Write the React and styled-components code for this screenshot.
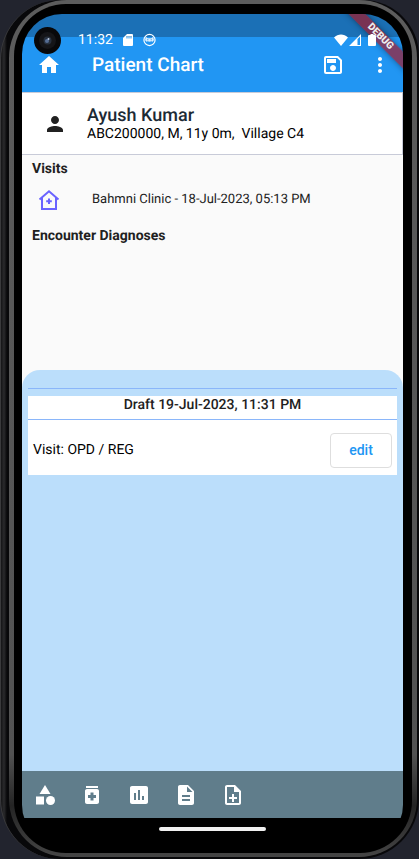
import React from "react";
import styled, { createGlobalStyle } from "styled-components";
import {
  MdHome,
  MdOutlineSave,
  MdMoreVert,
  MdPerson,
  MdCategory,
  MdMedication,
  MdAssessment,
  MdDescription,
  MdOutlineNoteAdd,
} from "react-icons/md";

const GlobalStyle = createGlobalStyle`
  * { box-sizing: border-box; }
  body {
    margin: 0;
    background: #22242e;
    font-family: Roboto, "Noto Sans", sans-serif;
    color: #212121;
    text-rendering: geometricPrecision;
  }
  h1, h2, p { margin: 0; }
  button { font: inherit; cursor: pointer; }
`;

const Shell = styled.div`
  display: flex;
  height: 100vh;
  min-height: 640px;
  padding: 0 2px 2px 8px;
  border-left: 1px solid #3a3a3c;
  border-radius: 60px 56px 60px 60px;
  background: linear-gradient(90deg, #141416, #2a2a2c 3px, #08080a 6px);
`;

const Rim = styled.div`
  flex: 1;
  display: flex;
  min-width: 0;
  padding: 4px 5px;
  border-radius: 58px;
  background: linear-gradient(#5c5c5c, #525252 88%, #242424 94%, #454545);
`;

const Glass = styled.div`
  flex: 1;
  display: flex;
  min-width: 0;
  padding: 10px 9px 8px 8px;
  border-radius: 52px;
  background: #000000;
`;

const Screen = styled.main`
  flex: 1;
  display: flex;
  flex-direction: column;
  min-width: 0;
  position: relative;
  overflow: hidden;
  border-radius: 40px;
  background: #000000;
`;

const Header = styled.header`
  padding: 17px 0 11px;
  background: linear-gradient(#1b70b6 23px, #2196f3 23px);
  color: #ffffff;
`;

const StatusBar = styled.div`
  display: flex;
  align-items: center;
  height: 18px;
  padding: 0 27px 0 12px;
  position: relative;
  z-index: 2;
`;

const Camera = styled.svg`
  width: 27px;
  height: 27px;
  margin-right: 17px;
`;

const Clock = styled.span`
  margin-right: 10px;
  font-size: 14px;
  line-height: 18px;
`;

const StatusIcon = styled.svg`
  flex: none;
  width: ${(p) => p.$width}px;
  height: 14px;
`;

const Notifications = styled.div`
  display: flex;
  gap: 10px;
`;

const Connectivity = styled.div`
  display: flex;
  gap: 1px;
  margin: 0 7px 0 auto;
`;

const DebugRibbon = styled.div`
  position: absolute;
  top: 17px;
  right: -27px;
  width: 100px;
  z-index: 1;
  transform: rotate(45deg);
  background: rgba(172, 18, 30, 0.65);
  box-shadow: 0 0 6px rgba(0, 0, 0, 0.4);
  color: #eeeeee;
  font-size: 10px;
  font-weight: 900;
  line-height: 12px;
  text-align: center;
`;

const Toolbar = styled.div`
  display: flex;
  align-items: center;
  height: 32px;
  padding: 0 11px 0 15px;
`;

const IconButton = styled.button`
  display: flex;
  padding: 0;
  border: 0;
  background: none;
  color: inherit;
  font-size: 24px;
`;

const ToolbarActions = styled.div`
  display: flex;
  gap: 23px;
  margin-left: auto;
`;

const Title = styled.h1`
  margin-left: 31px;
  font-size: 19px;
  line-height: 24px;
  font-weight: 500;
`;

const Patient = styled.section`
  display: flex;
  align-items: center;
  gap: 20px;
  height: 63px;
  padding-left: 21px;
  border: 1px solid #c8cbd8;
  border-left-width: 0;
  background: #ffffff;
  svg { font-size: 24px; }
`;

const PatientName = styled.h2`
  color: #1c2a35;
  font-size: 18px;
  line-height: 20px;
  font-weight: 500;
`;

const PatientInfo = styled.p`
  color: #000000;
  font-size: 14px;
  line-height: 16px;
  white-space: pre;
`;

const Chart = styled.section`
  flex: 34 1 0;
  padding: 5px 10px 3px;
  background: #fafafa;
`;

const Heading = styled.h2`
  font-size: 14px;
  line-height: 18px;
  font-weight: 700;
`;

const VisitRow = styled.div`
  display: flex;
  align-items: center;
  gap: 32px;
  height: 49px;
  padding: 0 6px 6px;
  font-size: 13px;
  svg { width: 22px; height: 22px; }
`;

const SheetArea = styled.section`
  flex: 66 1 0;
  display: flex;
  background: #fafafa;
`;

const Sheet = styled.div`
  flex: 1;
  min-width: 0;
  padding: 18px 6px;
  border-radius: 18px 18px 0 0;
  background: #bbdefb;
`;

const Rule = styled.hr`
  height: 1px;
  margin: 0;
  border: 0;
  background: #8ab6fa;
`;

const Draft = styled.article`
  margin-top: 7px;
  background: #ffffff;
`;

const DraftTitle = styled.h2`
  padding-bottom: 5px;
  font-size: 14px;
  line-height: 18px;
  font-weight: 500;
  text-align: center;
`;

const DraftRow = styled.div`
  display: flex;
  align-items: center;
  justify-content: space-between;
  height: 55px;
  padding: 6px 5px 0;
  color: #000000;
  font-size: 14px;
`;

const EditButton = styled.button`
  width: 62px;
  height: 35px;
  border: 1px solid #dedede;
  border-radius: 4px;
  background: #ffffff;
  color: #2196f3;
  font-size: 14px;
  font-weight: 500;
`;

const BottomBar = styled.nav`
  display: flex;
  align-items: center;
  gap: 23px;
  height: 47px;
  padding: 0 11px;
  background: #607d8b;
  color: #ffffff;
`;

const GestureArea = styled.div`
  height: 27px;
  padding-top: 9px;
`;

const GesturePill = styled.div`
  width: 28%;
  height: 4px;
  margin: 0 auto;
  border-radius: 2px;
  background: #f0f0f0;
`;

const tools = [
  ["Observations", MdCategory],
  ["Medications", MdMedication],
  ["Results", MdAssessment],
  ["Documents", MdDescription],
  ["Add note", MdOutlineNoteAdd],
];

function CameraLens() {
  return (
    <Camera viewBox="0 0 27 27" aria-hidden="true">
      <circle cx="13.5" cy="13.5" r="13.5" fill="#08080a" />
      <circle cx="13.5" cy="13.5" r="8.5" fill="#151518" />
      <circle cx="13.5" cy="13.5" r="4" fill="#27303e" />
      <circle cx="13" cy="14" r="2" fill="#566d94" />
      <circle cx="14.5" cy="12" r="1" fill="#b8c6dd" />
    </Camera>
  );
}

function SdCard() {
  return (
    <StatusIcon $width={10} viewBox="0 0 10 14" aria-hidden="true">
      <path fill="#fff" fillRule="evenodd" d="M4 1h5a1 1 0 0 1 1 1v10a1 1 0 0 1-1 1H1a1 1 0 0 1-1-1V5zM3.5 3v2.5h1V3zM5.5 3v2.5h1V3zM7.5 3v2.5h1V3z" />
    </StatusIcon>
  );
}

function CatFace() {
  return (
    <StatusIcon $width={13} viewBox="0 0 14 14" aria-hidden="true">
      <circle cx="7" cy="7" r="6" fill="none" stroke="#fff" strokeWidth="1.3" />
      <path fill="#fff" fillOpacity=".85" d="M3 3.500 5 5h4l2-1.500.8 3.500L10.500 9 9 8.300 7 9 5 8.300 3.500 9 2.200 7z" />
      <path fill="#2196f3" d="M4.600 6.200h1.100v1H4.600zM8.300 6.200h1.100v1H8.300z" />
    </StatusIcon>
  );
}

function Wifi() {
  return (
    <StatusIcon $width={14} viewBox="0 0 14 14" aria-hidden="true">
      <path fill="#fff" d="M0 4.500C4 .5 10 .5 14 4.500L7 13z" />
    </StatusIcon>
  );
}

function Signal() {
  return (
    <StatusIcon $width={12} viewBox="0 0 12 14" aria-hidden="true">
      <path fill="#fff" fillRule="evenodd" d="M12 1v12H0zM11 3.500 8.500 6v6H11z" />
    </StatusIcon>
  );
}

function Battery() {
  return (
    <StatusIcon $width={8} viewBox="0 0 8 14" aria-hidden="true">
      <path fill="#fff" d="M2.500 1h3v1H7a1 1 0 0 1 1 1v9a1 1 0 0 1-1 1H1a1 1 0 0 1-1-1V3a1 1 0 0 1 1-1h1.500z" />
    </StatusIcon>
  );
}

function ClinicIcon() {
  return (
    <svg viewBox="0 0 22 22" fill="none" stroke="#6a63ff" strokeWidth="2" aria-hidden="true">
      <path d="M1.500 10.500 11 2.300l9.500 8.200" />
      <path d="M4 8.500V20h14V8.500" />
      <path d="M11 9.500v5.500M8.200 12.300h5.600" />
    </svg>
  );
}

export default function App() {
  return (
    <>
      <GlobalStyle />
      <Shell>
        <Rim>
          <Glass>
            <Screen>
              <Header>
                <StatusBar>
                  <CameraLens />
                  <Clock>11:32</Clock>
                  <Notifications>
                    <SdCard />
                    <CatFace />
                  </Notifications>
                  <Connectivity>
                    <Wifi />
                    <Signal />
                  </Connectivity>
                  <Battery />
                </StatusBar>
                <Toolbar>
                  <IconButton aria-label="Home">
                    <MdHome />
                  </IconButton>
                  <Title>Patient Chart</Title>
                  <ToolbarActions>
                    <IconButton aria-label="Save">
                      <MdOutlineSave />
                    </IconButton>
                    <IconButton aria-label="More options">
                      <MdMoreVert />
                    </IconButton>
                  </ToolbarActions>
                </Toolbar>
              </Header>
              <DebugRibbon>DEBUG</DebugRibbon>
              <Patient>
                <MdPerson />
                <div>
                  <PatientName>Ayush Kumar</PatientName>
                  <PatientInfo>{"ABC200000, M, 11y 0m,  Village C4"}</PatientInfo>
                </div>
              </Patient>
              <Chart>
                <Heading>Visits</Heading>
                <VisitRow>
                  <ClinicIcon />
                  <span>Bahmni Clinic - 18-Jul-2023, 05:13 PM</span>
                </VisitRow>
                <Heading>Encounter Diagnoses</Heading>
              </Chart>
              <SheetArea>
                <Sheet>
                  <Rule />
                  <Draft>
                    <DraftTitle>Draft 19-Jul-2023, 11:31 PM</DraftTitle>
                    <Rule />
                    <DraftRow>
                      <span>Visit: OPD / REG</span>
                      <EditButton>edit</EditButton>
                    </DraftRow>
                  </Draft>
                </Sheet>
              </SheetArea>
              <BottomBar>
                {tools.map(([label, Icon]) => (
                  <IconButton key={label} aria-label={label}>
                    <Icon />
                  </IconButton>
                ))}
              </BottomBar>
              <GestureArea>
                <GesturePill />
              </GestureArea>
            </Screen>
          </Glass>
        </Rim>
      </Shell>
    </>
  );
}
